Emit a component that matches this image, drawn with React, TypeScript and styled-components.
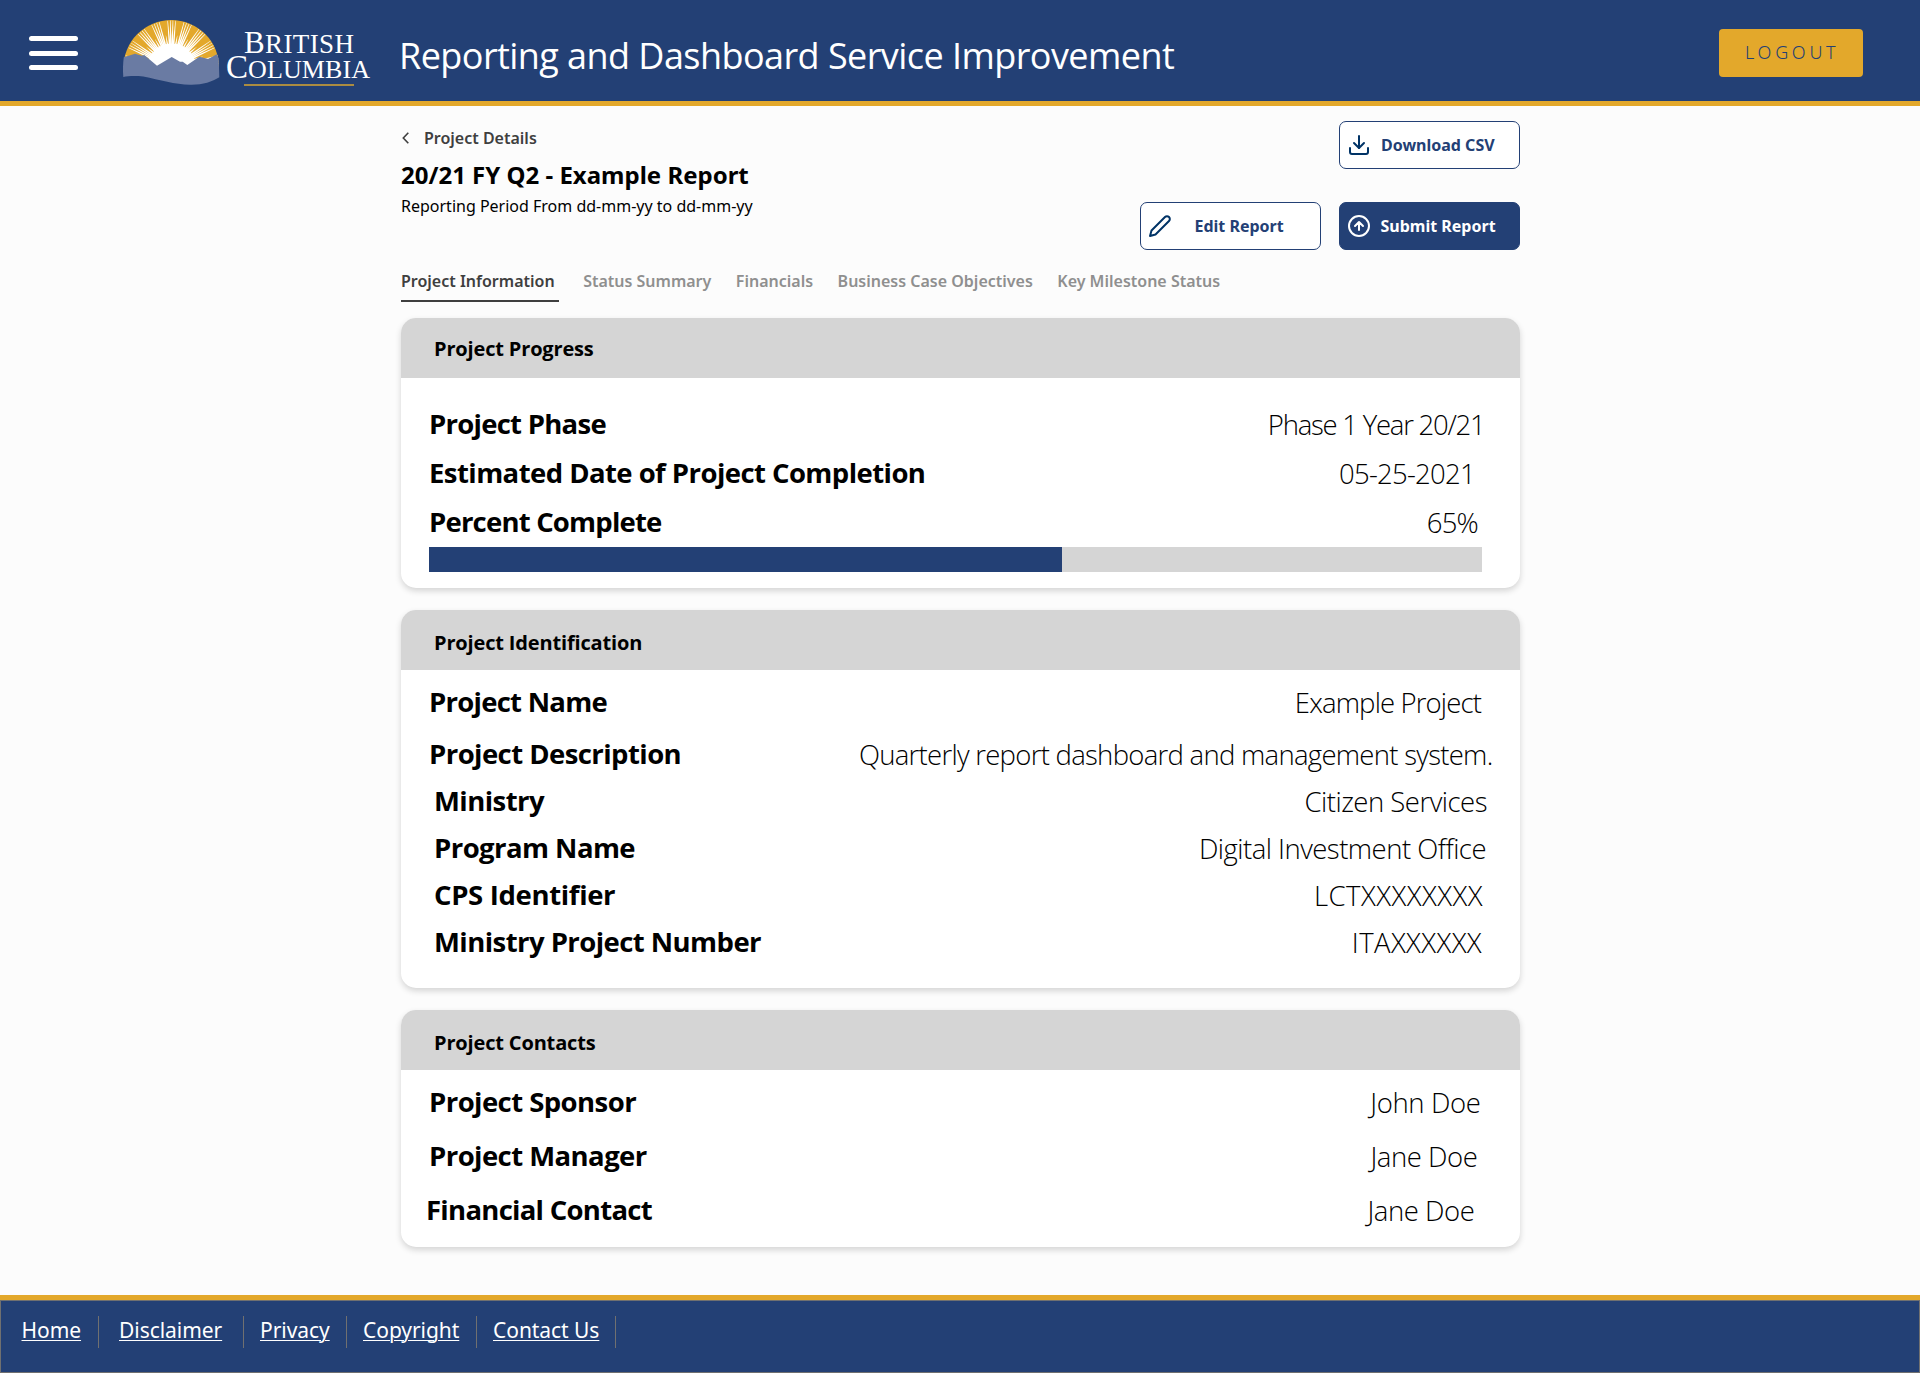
import React from "react";
import styled, { createGlobalStyle } from "styled-components";
import { Download } from "lucide-react";

const NAVY = "#234075";
const GOLD = "#e3a82b";
const NOTO = `"Noto Sans", "Open Sans", sans-serif`;
const OPEN = `"Open Sans", "Noto Sans", sans-serif`;

const GlobalStyle = createGlobalStyle`
  *, *::before, *::after { box-sizing: border-box; }
  body { margin: 0; background: #fcfcfc; color: #000; font-family: ${NOTO}; }
`;

const Page = styled.div`
  display: flex;
  flex-direction: column;
  width: 1920px;
  height: 1373px;
  background: #fcfcfc;
`;

/* ---------- header ---------- */

const Header = styled.header`
  display: flex;
  align-items: flex-start;
  height: 106px;
  flex: none;
  padding: 0 57px 0 29px;
  background: ${NAVY};
  border-bottom: 5px solid ${GOLD};
`;

const MenuButton = styled.button`
  display: flex;
  flex-direction: column;
  justify-content: space-between;
  width: 49px;
  height: 34px;
  margin: 36px 45px 0 0;
  padding: 0;
  border: 0;
  background: none;
`;

const MenuBar = styled.span`
  height: 5px;
  border-radius: 2.5px;
  background: #fff;
`;

const Logo = styled.svg`
  flex: none;
  margin-top: 20px;
  overflow: visible;
`;

const AppTitle = styled.h1`
  margin: 31px auto 0 28px;
  font: 400 36px/50px ${OPEN};
  letter-spacing: -0.56px;
  color: #fff;
  white-space: nowrap;
`;

const LogoutButton = styled.button`
  width: 144px;
  height: 48px;
  margin-top: 29px;
  padding: 0 0 2px 26px;
  border: 0;
  border-radius: 4px;
  background: ${GOLD};
  color: ${NAVY};
  font: 300 18px/46px ${NOTO};
  letter-spacing: 3.7px;
  text-align: left;
`;

/* ---------- report heading ---------- */

const Main = styled.main`
  width: 1119px;
  margin-left: 401px;
  flex: 1;
`;

const Intro = styled.section`
  display: flex;
  justify-content: space-between;
  height: 164px;
`;

const Heading = styled.div`
  padding-top: 21px;
`;

const BackLink = styled.a`
  display: flex;
  align-items: center;
  gap: 15px;
  padding-left: 1px;
  color: #3f3f3f;
  font: 600 16px/22px ${NOTO};
`;

const ReportTitle = styled.h2`
  margin: 9px 0 4px;
  font: 700 24px/33px ${NOTO};
`;

const Period = styled.p`
  margin: 0;
  font: 400 16px/22px ${NOTO};
`;

const Actions = styled.div`
  display: grid;
  grid-template-columns: 181px 181px;
  grid-template-rows: 48px 48px;
  column-gap: 18px;
  row-gap: 33px;
  padding-top: 15px;
`;

const ActionButton = styled.button<{ $filled?: boolean; $gap: number; $last?: boolean }>`
  display: flex;
  align-items: center;
  gap: ${(p) => p.$gap}px;
  ${(p) => p.$last && "grid-column: 2;"}
  padding: 0 0 0 7px;
  border: 1px solid ${NAVY};
  border-radius: 7px;
  background: ${(p) => (p.$filled ? NAVY : "#fff")};
  color: ${(p) => (p.$filled ? "#fff" : NAVY)};
  font: 700 16px/22px ${NOTO};
  white-space: nowrap;

  svg {
    flex: none;
    color: ${(p) => (p.$filled ? "#fff" : "#003366")};
  }
`;

const Tabs = styled.nav`
  display: flex;
  gap: 24.5px;
  height: 48px;
`;

const Tab = styled.a<{ $active?: boolean }>`
  height: 32px;
  padding-right: ${(p) => (p.$active ? 4 : 0)}px;
  border-bottom: 2px solid ${(p) => (p.$active ? "#3f3f3f" : "transparent")};
  color: ${(p) => (p.$active ? "#3f3f3f" : "#8f8f8f")};
  font: 600 16px/22px ${NOTO};
  white-space: nowrap;
`;

/* ---------- cards ---------- */

const Cards = styled.div`
  display: flex;
  flex-direction: column;
  gap: 22px;
`;

const CardBox = styled.section`
  border-radius: 15px;
  background: #fff;
  box-shadow: 0 3px 6px rgba(0, 0, 0, 0.16);
`;

const CardHeader = styled.h3<{ $drop?: number }>`
  height: 60px;
  margin: 0;
  padding: ${(p) => p.$drop ?? 1}px 33px 0;
  border-radius: 15px 15px 0 0;
  background: #d5d5d5;
  font: 700 20px/60px ${OPEN};
  letter-spacing: -0.16px;
`;

const CardBody = styled.div<{ $top: number; $bottom: number }>`
  padding: ${(p) => p.$top}px 27px ${(p) => p.$bottom}px 28px;
`;

const Rows = styled.dl<{ $gap: number }>`
  display: flex;
  flex-direction: column;
  gap: ${(p) => p.$gap}px;
  margin: 0;
`;

const RowBox = styled.div<{ $after?: number }>`
  display: flex;
  justify-content: space-between;
  height: 36px;
  margin-bottom: ${(p) => p.$after ?? 0}px;
  white-space: nowrap;
`;

const Label = styled.dt<{ $indent?: number; $tracking?: number }>`
  margin-left: ${(p) => p.$indent ?? 0}px;
  font: 700 27.5px/36px ${OPEN};
  letter-spacing: ${(p) => p.$tracking ?? -0.56}px;
`;

const Value = styled.dd<{ $end: number; $tracking: number }>`
  margin: 1px ${(p) => p.$end}px 0 0;
  font: 300 27.5px/36px ${OPEN};
  letter-spacing: ${(p) => p.$tracking}px;
`;

const ProgressTrack = styled.div`
  width: 1053px;
  height: 25px;
  margin-top: 7px;
  background: #d5d5d5;
`;

const ProgressFill = styled.div`
  height: 100%;
  background: ${NAVY};
`;

/* ---------- footer ---------- */

const Footer = styled.footer`
  flex: none;
  height: 78px;
  border-top: 5px solid ${GOLD};
`;

const FooterBar = styled.nav`
  display: flex;
  height: 73px;
  padding-top: 15px;
  border: 1px solid #707070;
  background: ${NAVY};
`;

const FooterItem = styled.div<{ $width: number; $left: number }>`
  width: ${(p) => p.$width}px;
  height: 32px;
  padding: 1px 0 0 ${(p) => p.$left}px;
  border-right: 1px solid #707070;
`;

const FooterLink = styled.a`
  color: #fff;
  font: 400 21px/26px ${NOTO};
  letter-spacing: -0.05px;
  text-decoration: underline;
  text-decoration-thickness: 1px;
  text-underline-offset: 2px;
  white-space: nowrap;
`;

/* ---------- pieces ---------- */

const SUN = { x: 48.6, y: 48 };

const ray = (deg: number, from: number, to: number, base: number, tip: number) => {
  const a = (deg * Math.PI) / 180;
  const at = (r: number, off: number) =>
    `${(SUN.x + Math.sin(a) * r + Math.cos(a) * off).toFixed(2)},${(SUN.y - Math.cos(a) * r + Math.sin(a) * off).toFixed(2)}`;
  return [at(from, -base), at(to, -tip), at(to, tip), at(from, base)].join(" ");
};

const BUNDLES = [-80, -60, -40, -20, 0, 20, 40, 60, 80];

function BritishColumbiaLogo() {
  return (
    <Logo width="248" height="66" viewBox="0 0 248 66" role="img" aria-label="British Columbia">
      <defs>
        <clipPath id="dome">
          <path d="M1 0H96V47H1Z" />
        </clipPath>
      </defs>
      <g clipPath="url(#dome)">
        <circle cx="48.3" cy="48" r="48" fill={GOLD} />
        <circle cx={SUN.x} cy={SUN.y} r="24.5" fill="#fff" />
        {BUNDLES.flatMap((b) =>
          [-4.8, -1.6, 1.6, 4.8].map((d) => (
            <polygon key={`${b}${d}`} points={ray(b + d, 22, 47.5, 0.9, 0.25)} fill="#fff" />
          ))
        )}
        {BUNDLES.map((b) => (
          <polygon key={b} points={ray(b + 10, 23, 33, 0.9, 0.1)} fill="#fff" />
        ))}
      </g>
      <path
        d="M.8 37.3 12 33.7l6.7 2 2.6-.7L34 45.7 48.7 37l8.3 4.7h2.7l4.6 3.3 12-8.3 9 2.3 8.4-4.7 2 4 .6 19C89 62 79 65 67 64.7 52 64.5 37 60 20.3 56.500 12 55.600 5 56 .3 57 -.3 50 0 43 .8 37.300Z"
        fill="#6a7ba3"
      />
      <g fill="#fff" fontFamily='"Liberation Serif", serif'>
        <text x="121" y="33.3" textLength="110" fontSize="27">
          <tspan fontSize="31">B</tspan>RITISH
        </text>
        <text x="103" y="57.8" textLength="144" fontSize="26">
          <tspan fontSize="33">C</tspan>OLUMBIA
        </text>
      </g>
      <rect x="121" y="64" width="110" height="2" fill="#ab8c41" />
    </Logo>
  );
}

const ChevronIcon = () => (
  <svg width="7" height="12" viewBox="0 0 7 12" fill="none" stroke="#3f3f3f" strokeWidth="1.6">
    <path d="M6.3.7 1.3 6l5 5.3" />
  </svg>
);

const strokeProps = {
  width: 24,
  height: 24,
  viewBox: "0 0 24 24",
  fill: "none",
  stroke: "currentColor",
  strokeWidth: 2,
  strokeLinecap: "round" as const,
  strokeLinejoin: "round" as const,
};

const PencilIcon = () => (
  <svg {...strokeProps}>
    <path d="M17 3a2.828 2.828 0 1 1 4 4L7.5 20.5 2 22l1.5-5.5L17 3z" />
  </svg>
);

const SubmitIcon = () => (
  <svg {...strokeProps}>
    <circle cx="12" cy="12" r="10" />
    <path d="M16 12l-4-4-4 4M12 16V8" />
  </svg>
);

type Item = {
  label: string;
  value: string;
  end: number;
  tracking: number;
  indent?: number;
  after?: number;
  labelTracking?: number;
};

const PROGRESS: Item[] = [
  { label: "Project Phase", value: "Phase 1 Year 20/21", end: 8.5, tracking: -1.24, labelTracking: -0.74 },
  { label: "Estimated Date of Project Completion", value: "05-25-2021", end: 18, tracking: -0.72 },
  { label: "Percent Complete", value: "65%", end: 15, tracking: -0.8, labelTracking: -0.8 },
];

const IDENTIFICATION: Item[] = [
  { label: "Project Name", value: "Example Project", end: 12, tracking: -0.86, after: 5, labelTracking: -0.74 },
  { label: "Project Description", value: "Quarterly report dashboard and management system.", end: 0.5, tracking: -0.72 },
  { label: "Ministry", value: "Citizen Services", end: 6, tracking: -0.5, indent: 5 },
  { label: "Program Name", value: "Digital Investment Office", end: 7, tracking: -0.52, indent: 5 },
  { label: "CPS Identifier", value: "LCTXXXXXXXX", end: 10, tracking: 0.47, indent: 5, labelTracking: -0.34 },
  { label: "Ministry Project Number", value: "ITAXXXXXX", end: 11, tracking: 0.4, indent: 5 },
];

const CONTACTS: Item[] = [
  { label: "Project Sponsor", value: "John Doe", end: 12.5, tracking: -0.37 },
  { label: "Project Manager", value: "Jane Doe", end: 15.5, tracking: -0.42 },
  { label: "Financial Contact", value: "Jane Doe", end: 18.5, tracking: -0.42, indent: -3, labelTracking: -0.72 },
];

const TABS = ["Project Information", "Status Summary", "Financials", "Business Case Objectives", "Key Milestone Status"];

const LINKS = [
  { text: "Home", width: 98, left: 20.5 },
  { text: "Disclaimer", width: 145, left: 20 },
  { text: "Privacy", width: 103, left: 16 },
  { text: "Copyright", width: 130, left: 16 },
  { text: "Contact Us", width: 139, left: 16 },
];

const Details = ({ items, gap }: { items: Item[]; gap: number }) => (
  <Rows $gap={gap}>
    {items.map((i) => (
      <RowBox key={i.label} $after={i.after}>
        <Label $indent={i.indent} $tracking={i.labelTracking}>
          {i.label}
        </Label>
        <Value $end={i.end} $tracking={i.tracking}>
          {i.value}
        </Value>
      </RowBox>
    ))}
  </Rows>
);

export default function App() {
  const progressWidth = 632.5;
  return (
    <Page>
      <GlobalStyle />
      <Header>
        <MenuButton aria-label="Menu">
          <MenuBar />
          <MenuBar />
          <MenuBar />
        </MenuButton>
        <BritishColumbiaLogo />
        <AppTitle>Reporting and Dashboard Service Improvement</AppTitle>
        <LogoutButton>LOGOUT</LogoutButton>
      </Header>

      <Main>
        <Intro>
          <Heading>
            <BackLink>
              <ChevronIcon />
              Project Details
            </BackLink>
            <ReportTitle>20/21 FY Q2 - Example Report</ReportTitle>
            <Period>Reporting Period From dd-mm-yy to dd-mm-yy</Period>
          </Heading>
          <Actions>
            <ActionButton $gap={10} $last>
              <Download size={24} />
              Download CSV
            </ActionButton>
            <ActionButton $gap={22.5}>
              <PencilIcon />
              Edit Report
            </ActionButton>
            <ActionButton $gap={9.5} $filled>
              <SubmitIcon />
              Submit Report
            </ActionButton>
          </Actions>
        </Intro>

        <Tabs>
          {TABS.map((t, i) => (
            <Tab key={t} $active={i === 0}>
              {t}
            </Tab>
          ))}
        </Tabs>

        <Cards>
          <CardBox>
            <CardHeader>Project Progress</CardHeader>
            <CardBody $top={28} $bottom={16}>
              <Details items={PROGRESS} gap={13} />
              <ProgressTrack>
                <ProgressFill style={{ width: progressWidth }} />
              </ProgressTrack>
            </CardBody>
          </CardBox>
          <CardBox>
            <CardHeader $drop={3}>Project Identification</CardHeader>
            <CardBody $top={14} $bottom={28}>
              <Details items={IDENTIFICATION} gap={11} />
            </CardBody>
          </CardBox>
          <CardBox>
            <CardHeader $drop={3}>Project Contacts</CardHeader>
            <CardBody $top={14} $bottom={19}>
              <Details items={CONTACTS} gap={18} />
            </CardBody>
          </CardBox>
        </Cards>
      </Main>

      <Footer>
        <FooterBar>
          {LINKS.map((l) => (
            <FooterItem key={l.text} $left={l.left} $width={l.width}>
              <FooterLink>{l.text}</FooterLink>
            </FooterItem>
          ))}
        </FooterBar>
      </Footer>
    </Page>
  );
}
